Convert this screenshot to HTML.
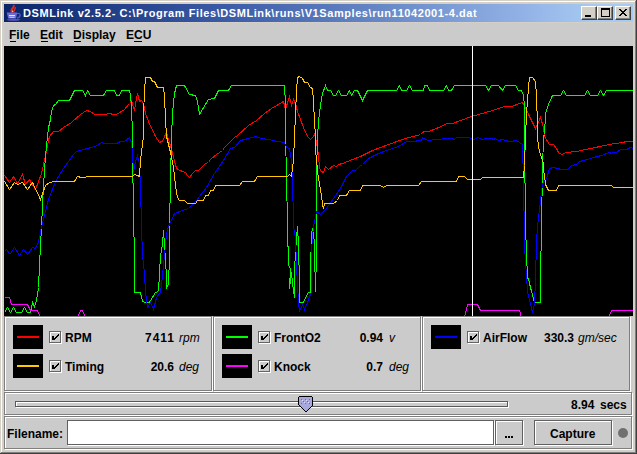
<!DOCTYPE html>
<html><head><meta charset="utf-8">
<style>
html,body{margin:0;padding:0;}
body{width:637px;height:454px;position:relative;overflow:hidden;background:#d4d0c8;font-family:"Liberation Sans",sans-serif;}
.a{position:absolute;}
.t{position:absolute;white-space:nowrap;font-weight:bold;font-size:12px;line-height:14px;color:#000;}
.it{font-weight:normal;font-style:italic;}
</style></head><body>
<div class="a" style="left:0px;top:0px;width:637px;height:454px;background:#404040;"></div>
<div class="a" style="left:0px;top:0px;width:636px;height:453px;background:#d4d0c8;"></div>
<div class="a" style="left:1px;top:1px;width:635px;height:452px;background:#808080;"></div>
<div class="a" style="left:1px;top:1px;width:634px;height:451px;background:#fff;"></div>
<div class="a" style="left:2px;top:2px;width:633px;height:450px;background:#d4d0c8;"></div>
<div class="a" style="left:4px;top:4px;width:629px;height:18px;background:linear-gradient(to right,#0a246a 0px,#3c5ca8 226px,#6f90cc 406px,#94b4e8 526px,#a6caf0 590px,#a6caf0 629px);"></div>
<div class="t" style="left:23px;top:6px;font-size:11px;line-height:14px;color:#fff;letter-spacing:0.57px">DSMLink v2.5.2- C:\Program Files\DSMLink\runs\V1Samples\run11042001-4.dat</div>
<svg class="a" style="left:0px;top:0px" width="24" height="24"><path d="M13.5 5 C14.8 7 12 8.5 11.5 10 C11 11.5 12.3 12.3 13 12.7" stroke="#e8281c" stroke-width="1.9" fill="none"/><path d="M15.5 7.2 C15.2 9 14 10.5 13.6 12.2" stroke="#e8281c" stroke-width="1.4" fill="none"/><rect x="12" y="10.5" width="1.2" height="1.5" fill="#f0c040"/><path d="M17 13.6 C21.5 12.8 21 17 17 18.2" stroke="#5a5ac8" stroke-width="1.2" fill="none"/><path d="M6.8 12.6 L17.2 12.6 L16 18.6 L8.2 18.6 Z" fill="#6a6ad8"/><rect x="9" y="15" width="6" height="1.2" fill="#e0e0ff"/><rect x="9.5" y="17" width="5" height="1" fill="#b8b8f8"/><ellipse cx="13.5" cy="19.8" rx="7" ry="0.9" fill="#5a5ac0"/></svg>
<div class="a" style="left:581px;top:6px;width:16px;height:14px;box-sizing:border-box;background:#d4d0c8;border-top:1px solid #fff;border-left:1px solid #fff;border-right:1px solid #404040;border-bottom:1px solid #404040;box-shadow:inset -1px -1px 0 #808080"></div>
<div class="a" style="left:597px;top:6px;width:16px;height:14px;box-sizing:border-box;background:#d4d0c8;border-top:1px solid #fff;border-left:1px solid #fff;border-right:1px solid #404040;border-bottom:1px solid #404040;box-shadow:inset -1px -1px 0 #808080"></div>
<div class="a" style="left:615px;top:6px;width:16px;height:14px;box-sizing:border-box;background:#d4d0c8;border-top:1px solid #fff;border-left:1px solid #fff;border-right:1px solid #404040;border-bottom:1px solid #404040;box-shadow:inset -1px -1px 0 #808080"></div>
<div class="a" style="left:585px;top:15px;width:6px;height:2px;background:#000;"></div>
<div class="a" style="left:601px;top:8px;width:9px;height:9px;box-sizing:border-box;border:1px solid #000;border-top-width:2px"></div>
<svg class="a" style="left:619px;top:9px" width="8" height="7" shape-rendering="crispEdges"><path d="M0 0h2v1h-2z M6 0h2v1h-2z M1 1h2v1h-2z M5 1h2v1h-2z M2 2h4v1h-4z M3 3h2v1h-2z M2 4h4v1h-4z M1 5h2v1h-2z M5 5h2v1h-2z M0 6h2v1h-2z M6 6h2v1h-2z" fill="#000"/></svg>
<div class="a" style="left:4px;top:23px;width:629px;height:427px;background:#cbcbcb;"></div>
<div class="t" style="left:9px;top:28px;">File</div>
<div class="t" style="left:40px;top:28px;">Edit</div>
<div class="t" style="left:73px;top:28px;">Display</div>
<div class="t" style="left:126px;top:28px;">ECU</div>
<div class="a" style="left:10px;top:41px;width:6px;height:1px;background:#000;"></div>
<div class="a" style="left:41px;top:41px;width:7px;height:1px;background:#000;"></div>
<div class="a" style="left:74px;top:41px;width:7px;height:1px;background:#000;"></div>
<div class="a" style="left:134px;top:41px;width:8px;height:1px;background:#000;"></div>
<svg class="a" style="left:4px;top:46px" width="629" height="270" shape-rendering="crispEdges">
<rect width="629" height="270" fill="#000"/>
<g fill="none" stroke-width="1">
<polyline stroke="#ff0000" points="0.5,129.5 5.5,136.5 9.5,130.5 13.5,137.5 18.5,128.5 21.5,138.5 25.5,133.5 27.5,137.5 31.5,143.5 37.5,127.5 41.5,109.5 44.5,94.5 45.5,90.5 49.5,85.5 54.5,85.5 59.5,81.5 67.5,76.5 76.5,68.5 82.5,64.5 86.5,65.5 90.5,68.5 100.5,68.5 105.5,67.5 109.5,68.5 112.5,68.5 120.5,63.5 125.5,57.5 127.5,54.5 129.5,61.5 130.5,63.5 133.5,47.5 135.5,55.5 137.5,54.5 139.5,57.5 141.5,67.5 144.5,75.5 151.5,90.5 155.5,96.5 159.5,94.5 160.5,90.5 162.5,86.5 163.5,90.5 168.5,106.5 171.5,119.5 173.5,123.5 181.5,126.5 183.5,129.5 185.5,131.5 188.5,127.5 191.5,124.5 194.5,124.5 197.5,121.5 201.5,117.5 204.5,116.5 206.5,113.5 212.5,108.5 218.5,104.5 220.5,101.5 230.5,91.5 233.5,89.5 244.5,79.5 252.5,74.5 260.5,67.5 267.5,62.5 279.5,55.5 281.5,63.5 285.5,50.5 287.5,59.5 289.5,53.5 291.5,57.5 293.5,65.5 299.5,81.5 303.5,90.5 306.5,93.5 309.5,90.5 311.5,86.5 311.5,90.5 314.5,109.5 315.5,122.5 317.5,125.5 319.5,126.5 321.5,120.5 324.5,123.5 329.5,119.5 332.5,120.5 334.5,118.5 338.5,117.5 348.5,113.5 356.5,110.5 368.5,104.5 384.5,98.5 401.5,92.5 416.5,88.5 418.5,86.5 420.5,85.5 424.5,85.5 432.5,82.5 443.5,77.5 448.5,77.5 456.5,74.5 467.5,70.5 488.5,64.5 500.5,60.5 507.5,60.5 518.5,56.5 519.5,58.5 521.5,61.5 524.5,68.5 531.5,82.5 536.5,71.5 539.5,81.5 540.5,90.5 545.5,98.5 549.5,98.5 552.5,102.5 554.5,106.5 557.5,108.5 562.5,106.5 572.5,105.5 586.5,102.5 600.5,99.5 610.5,97.5 619.5,96.5 621.5,95.5 629.5,95.5"/>
<polyline stroke="#00ff00" points="0.5,266.5 3.5,261.5 6.5,266.5 9.5,261.5 12.5,266.5 17.5,266.5 20.5,261.5 23.5,266.5 26.5,266.5 28.5,256.5 30.5,260.5 32.5,254.5 34.5,241.5 35.5,219.5 37.5,180.5 39.5,139.5 41.5,109.5 43.5,90.5 44.5,81.5 46.5,73.5 47.5,65.5 49.5,59.5 51.5,58.5 54.5,54.5 65.5,54.5 70.5,44.5 78.5,44.5 81.5,49.5 83.5,44.5 86.5,49.5 99.5,49.5 102.5,44.5 110.5,44.5 112.5,49.5 115.5,49.5 117.5,44.5 125.5,44.5 126.5,49.5 127.5,59.5 128.5,90.5 129.5,180.5 130.5,200.5 130.5,246.5 136.5,246.5 138.5,255.5 141.5,256.5 145.5,256.5 151.5,246.5 154.5,245.5 155.5,227.5 156.5,209.5 158.5,198.5 159.5,184.5 160.5,199.5 161.5,213.5 162.5,232.5 162.5,242.5 164.5,237.5 165.5,211.5 165.5,180.5 167.5,90.5 168.5,67.5 170.5,47.5 172.5,39.5 180.5,39.5 185.5,48.5 191.5,49.5 193.5,55.5 195.5,68.5 204.5,53.5 210.5,52.5 214.5,44.5 224.5,44.5 227.5,39.5 280.5,39.5 281.5,57.5 281.5,90.5 282.5,129.5 283.5,180.5 284.5,219.5 286.5,222.5 285.5,242.5 287.5,226.5 288.5,237.5 290.5,251.5 290.5,223.5 292.5,191.5 293.5,180.5 294.5,199.5 295.5,237.5 295.5,256.5 299.5,256.5 302.5,249.5 304.5,246.5 306.5,246.5 306.5,226.5 307.5,186.5 309.5,180.5 310.5,205.5 311.5,245.5 312.5,207.5 312.5,180.5 312.5,129.5 313.5,90.5 314.5,75.5 316.5,59.5 318.5,47.5 321.5,39.5 323.5,44.5 326.5,44.5 329.5,49.5 331.5,49.5 334.5,44.5 337.5,49.5 342.5,49.5 345.5,44.5 347.5,49.5 350.5,44.5 353.5,44.5 358.5,54.5 363.5,44.5 392.5,44.5 395.5,39.5 397.5,44.5 402.5,44.5 405.5,39.5 408.5,44.5 419.5,44.5 420.5,39.5 423.5,39.5 425.5,44.5 439.5,44.5 442.5,39.5 444.5,44.5 447.5,44.5 450.5,39.5 481.5,39.5 484.5,44.5 487.5,39.5 494.5,39.5 498.5,44.5 501.5,39.5 511.5,39.5 514.5,44.5 517.5,44.5 519.5,49.5 520.5,59.5 520.5,90.5 521.5,180.5 522.5,207.5 523.5,232.5 524.5,232.5 525.5,237.5 527.5,245.5 530.5,256.5 536.5,256.5 536.5,230.5 537.5,180.5 538.5,123.5 539.5,90.5 540.5,88.5 541.5,67.5 544.5,58.5 548.5,49.5 556.5,49.5 559.5,44.5 562.5,49.5 580.5,49.5 583.5,44.5 586.5,49.5 593.5,49.5 596.5,44.5 599.5,49.5 602.5,44.5 629.5,44.5"/>
<polyline stroke="#ff00ff" points="0.5,251.5 5.5,251.5 7.5,258.5 23.5,258.5 26.5,264.5 33.5,264.5 36.5,271.5 73.5,271.5 76.5,264.5 78.5,264.5 81.5,271.5 460.5,271.5 463.5,258.5 473.5,258.5 476.5,264.5 515.5,264.5 517.5,271.5 604.5,271.5 607.5,264.5 629.5,264.5"/>
<polyline stroke="#0000ff" points="0.5,205.5 2.5,203.5 5.5,207.5 6.5,207.5 10.5,201.5 15.5,209.5 19.5,203.5 23.5,208.5 28.5,201.5 31.5,202.5 34.5,195.5 36.5,186.5 37.5,180.5 40.5,169.5 44.5,153.5 51.5,135.5 59.5,122.5 69.5,108.5 72.5,105.5 79.5,103.5 87.5,101.5 93.5,99.5 97.5,96.5 100.5,97.5 112.5,97.5 116.5,95.5 120.5,95.5 125.5,91.5 127.5,96.5 128.5,107.5 129.5,125.5 131.5,115.5 133.5,109.5 135.5,117.5 136.5,141.5 137.5,180.5 138.5,209.5 140.5,227.5 141.5,245.5 143.5,261.5 146.5,256.5 149.5,263.5 152.5,251.5 156.5,246.5 158.5,229.5 160.5,209.5 162.5,187.5 164.5,180.5 170.5,167.5 178.5,164.5 184.5,162.5 192.5,154.5 202.5,141.5 210.5,127.5 219.5,114.5 226.5,102.5 230.5,101.5 236.5,94.5 244.5,92.5 251.5,90.5 257.5,92.5 264.5,93.5 273.5,95.5 280.5,96.5 282.5,101.5 285.5,102.5 287.5,115.5 288.5,129.5 289.5,180.5 291.5,191.5 292.5,219.5 294.5,255.5 295.5,265.5 298.5,258.5 300.5,263.5 303.5,256.5 307.5,245.5 307.5,203.5 309.5,180.5 312.5,165.5 316.5,168.5 322.5,162.5 329.5,152.5 336.5,142.5 342.5,130.5 348.5,124.5 351.5,124.5 355.5,120.5 358.5,118.5 364.5,112.5 374.5,107.5 382.5,104.5 394.5,100.5 402.5,95.5 411.5,95.5 413.5,94.5 417.5,94.5 418.5,91.5 423.5,94.5 427.5,94.5 428.5,93.5 437.5,93.5 438.5,92.5 448.5,92.5 450.5,93.5 452.5,91.5 464.5,91.5 470.5,93.5 473.5,91.5 478.5,93.5 481.5,92.5 487.5,92.5 489.5,93.5 491.5,92.5 494.5,94.5 498.5,93.5 501.5,94.5 505.5,95.5 508.5,95.5 510.5,94.5 512.5,94.5 515.5,96.5 518.5,98.5 518.5,104.5 519.5,129.5 519.5,149.5 520.5,180.5 520.5,199.5 521.5,215.5 523.5,245.5 528.5,266.5 530.5,257.5 531.5,233.5 532.5,195.5 533.5,180.5 536.5,154.5 538.5,137.5 542.5,132.5 545.5,122.5 549.5,121.5 553.5,122.5 557.5,123.5 563.5,123.5 567.5,119.5 572.5,118.5 575.5,115.5 579.5,114.5 583.5,113.5 589.5,111.5 597.5,109.5 605.5,106.5 607.5,107.5 608.5,106.5 612.5,106.5 616.5,103.5 622.5,103.5 626.5,101.5 629.5,102.5"/>
<polyline stroke="#ffc800" points="0.5,135.5 5.5,143.5 10.5,136.5 13.5,138.5 18.5,136.5 23.5,143.5 28.5,136.5 36.5,153.5 38.5,147.5 41.5,139.5 45.5,136.5 51.5,135.5 70.5,135.5 73.5,130.5 77.5,131.5 81.5,131.5 82.5,130.5 128.5,130.5 130.5,128.5 133.5,129.5 135.5,130.5 136.5,113.5 139.5,90.5 139.5,69.5 140.5,44.5 141.5,31.5 146.5,31.5 148.5,35.5 150.5,35.5 153.5,41.5 159.5,41.5 160.5,50.5 161.5,73.5 162.5,90.5 166.5,106.5 169.5,121.5 171.5,139.5 173.5,151.5 175.5,154.5 180.5,154.5 183.5,157.5 191.5,157.5 193.5,154.5 199.5,154.5 201.5,149.5 204.5,149.5 206.5,144.5 209.5,144.5 211.5,139.5 235.5,139.5 238.5,135.5 250.5,135.5 253.5,130.5 283.5,130.5 285.5,128.5 287.5,130.5 289.5,113.5 290.5,90.5 292.5,45.5 293.5,31.5 295.5,30.5 298.5,32.5 300.5,36.5 303.5,36.5 306.5,41.5 308.5,42.5 309.5,55.5 310.5,75.5 311.5,90.5 311.5,104.5 312.5,112.5 313.5,125.5 315.5,137.5 317.5,149.5 318.5,158.5 319.5,162.5 320.5,157.5 329.5,157.5 333.5,154.5 335.5,149.5 342.5,149.5 345.5,144.5 356.5,144.5 358.5,139.5 376.5,139.5 379.5,141.5 382.5,139.5 414.5,139.5 417.5,135.5 452.5,135.5 454.5,130.5 460.5,130.5 463.5,133.5 476.5,133.5 478.5,131.5 519.5,131.5 520.5,119.5 521.5,90.5 522.5,67.5 524.5,41.5 525.5,31.5 528.5,31.5 531.5,35.5 532.5,49.5 533.5,79.5 533.5,90.5 534.5,101.5 537.5,111.5 539.5,117.5 539.5,123.5 540.5,129.5 541.5,138.5 544.5,144.5 552.5,144.5 554.5,139.5 607.5,139.5 609.5,141.5 629.5,141.5"/>
</g><rect x="468" y="0" width="1" height="270" fill="#fff"/></svg>
<div class="a" style="left:5px;top:317px;width:208px;height:75px;box-sizing:border-box;border:1px solid #fff"></div>
<div class="a" style="left:4px;top:316px;width:208px;height:75px;box-sizing:border-box;border:1px solid #7e7e7e"></div>
<div class="a" style="left:214px;top:317px;width:208px;height:75px;box-sizing:border-box;border:1px solid #fff"></div>
<div class="a" style="left:213px;top:316px;width:208px;height:75px;box-sizing:border-box;border:1px solid #7e7e7e"></div>
<div class="a" style="left:423px;top:317px;width:208px;height:75px;box-sizing:border-box;border:1px solid #fff"></div>
<div class="a" style="left:422px;top:316px;width:208px;height:75px;box-sizing:border-box;border:1px solid #7e7e7e"></div>
<div class="a" style="left:13px;top:325px;width:30px;height:24px;background:#000;"></div>
<div class="a" style="left:17px;top:336px;width:22px;height:2px;background:#ff0000;"></div>
<div class="a" style="left:50px;top:332px;width:12px;height:12px;box-sizing:border-box;border:1px solid #fff"></div>
<div class="a" style="left:49px;top:331px;width:12px;height:12px;box-sizing:border-box;border:1px solid #646464"></div>
<svg class="a" style="left:49px;top:331px" width="13" height="13" shape-rendering="crispEdges"><path d="M3 5h2v4h-2z M9 3h1v1h-1z M8 4h1v2h-1z M9 4h1v1h-1z M7 5h1v2h-1z M6 6h1v2h-1z M5 7h1v2h-1z" fill="#000"/></svg>
<div class="t" style="left:65px;top:331px;">RPM</div>
<div class="t" style="right:462px;top:331px;letter-spacing:1px">7411</div>
<div class="t it" style="left:179px;top:331px;">rpm</div>
<div class="a" style="left:13px;top:354px;width:30px;height:24px;background:#000;"></div>
<div class="a" style="left:17px;top:365px;width:22px;height:2px;background:#ffc800;"></div>
<div class="a" style="left:50px;top:361px;width:12px;height:12px;box-sizing:border-box;border:1px solid #fff"></div>
<div class="a" style="left:49px;top:360px;width:12px;height:12px;box-sizing:border-box;border:1px solid #646464"></div>
<svg class="a" style="left:49px;top:360px" width="13" height="13" shape-rendering="crispEdges"><path d="M3 5h2v4h-2z M9 3h1v1h-1z M8 4h1v2h-1z M9 4h1v1h-1z M7 5h1v2h-1z M6 6h1v2h-1z M5 7h1v2h-1z" fill="#000"/></svg>
<div class="t" style="left:65px;top:360px;">Timing</div>
<div class="t" style="right:463px;top:360px;">20.6</div>
<div class="t it" style="left:179px;top:360px;">deg</div>
<div class="a" style="left:222px;top:325px;width:30px;height:24px;background:#000;"></div>
<div class="a" style="left:226px;top:336px;width:22px;height:2px;background:#00ff00;"></div>
<div class="a" style="left:259px;top:332px;width:12px;height:12px;box-sizing:border-box;border:1px solid #fff"></div>
<div class="a" style="left:258px;top:331px;width:12px;height:12px;box-sizing:border-box;border:1px solid #646464"></div>
<svg class="a" style="left:258px;top:331px" width="13" height="13" shape-rendering="crispEdges"><path d="M3 5h2v4h-2z M9 3h1v1h-1z M8 4h1v2h-1z M9 4h1v1h-1z M7 5h1v2h-1z M6 6h1v2h-1z M5 7h1v2h-1z" fill="#000"/></svg>
<div class="t" style="left:274px;top:331px;">FrontO2</div>
<div class="t" style="right:254px;top:331px;">0.94</div>
<div class="t it" style="left:389px;top:331px;">v</div>
<div class="a" style="left:222px;top:354px;width:30px;height:24px;background:#000;"></div>
<div class="a" style="left:226px;top:365px;width:22px;height:2px;background:#ff00ff;"></div>
<div class="a" style="left:259px;top:361px;width:12px;height:12px;box-sizing:border-box;border:1px solid #fff"></div>
<div class="a" style="left:258px;top:360px;width:12px;height:12px;box-sizing:border-box;border:1px solid #646464"></div>
<svg class="a" style="left:258px;top:360px" width="13" height="13" shape-rendering="crispEdges"><path d="M3 5h2v4h-2z M9 3h1v1h-1z M8 4h1v2h-1z M9 4h1v1h-1z M7 5h1v2h-1z M6 6h1v2h-1z M5 7h1v2h-1z" fill="#000"/></svg>
<div class="t" style="left:274px;top:360px;">Knock</div>
<div class="t" style="right:254px;top:360px;">0.7</div>
<div class="t it" style="left:389px;top:360px;">deg</div>
<div class="a" style="left:431px;top:325px;width:30px;height:24px;background:#000;"></div>
<div class="a" style="left:435px;top:336px;width:22px;height:2px;background:#0000ff;"></div>
<div class="a" style="left:468px;top:332px;width:12px;height:12px;box-sizing:border-box;border:1px solid #fff"></div>
<div class="a" style="left:467px;top:331px;width:12px;height:12px;box-sizing:border-box;border:1px solid #646464"></div>
<svg class="a" style="left:467px;top:331px" width="13" height="13" shape-rendering="crispEdges"><path d="M3 5h2v4h-2z M9 3h1v1h-1z M8 4h1v2h-1z M9 4h1v1h-1z M7 5h1v2h-1z M6 6h1v2h-1z M5 7h1v2h-1z" fill="#000"/></svg>
<div class="t" style="left:483px;top:331px;">AirFlow</div>
<div class="t" style="right:63px;top:331px;">330.3</div>
<div class="t it" style="left:578px;top:331px;">gm/sec</div>
<div class="a" style="left:5px;top:393px;width:628px;height:23px;box-sizing:border-box;border:1px solid #fff"></div>
<div class="a" style="left:4px;top:392px;width:628px;height:23px;box-sizing:border-box;border:1px solid #7e7e7e"></div>
<div class="a" style="left:16px;top:402px;width:493px;height:6px;box-sizing:border-box;border:1px solid #fff"></div>
<div class="a" style="left:15px;top:401px;width:493px;height:6px;box-sizing:border-box;border:1px solid #585858"></div>
<svg class="a" style="left:298px;top:396px" width="16" height="17" shape-rendering="crispEdges"><path d="M1 0h13v1h1v8l-7 7h-1l-7-7v-8h1z" fill="#000"/><path d="M1 1h13v8l-6.5 6.5l-6.5-6.5z" fill="#a8a8dc"/><path d="M3 3h1v1h-1z M7 3h1v1h-1z M11 3h1v1h-1z M5 5h1v1h-1z M9 5h1v1h-1z M3 7h1v1h-1z M7 7h1v1h-1z M11 7h1v1h-1z" fill="#6a6aa0"/><path d="M4 4h1v1h-1z M8 4h1v1h-1z M6 6h1v1h-1z M10 6h1v1h-1z" fill="#d8d8ff"/></svg>
<div class="t" style="left:571px;top:398px;">8.94</div>
<div class="t" style="left:600px;top:398px;">secs</div>
<div class="a" style="left:5px;top:417px;width:628px;height:33px;box-sizing:border-box;border:1px solid #fff"></div>
<div class="a" style="left:4px;top:416px;width:628px;height:33px;box-sizing:border-box;border:1px solid #7e7e7e"></div>
<div class="t" style="left:7px;top:427px;">Filename:</div>
<div class="a" style="left:68px;top:421px;width:427px;height:25px;box-sizing:border-box;border:1px solid #fff"></div>
<div class="a" style="left:67px;top:420px;width:427px;height:25px;box-sizing:border-box;border:1px solid #606060"></div>
<div class="a" style="left:68px;top:421px;width:425px;height:23px;background:#fff;"></div>
<div class="a" style="left:496px;top:421px;width:28px;height:25px;box-sizing:border-box;border:1px solid #fff"></div>
<div class="a" style="left:495px;top:420px;width:28px;height:25px;box-sizing:border-box;border:1px solid #606060"></div>
<div class="a" style="left:505px;top:436px;width:2px;height:2px;background:#000;"></div>
<div class="a" style="left:508px;top:436px;width:2px;height:2px;background:#000;"></div>
<div class="a" style="left:511px;top:436px;width:2px;height:2px;background:#000;"></div>
<div class="a" style="left:535px;top:421px;width:78px;height:25px;box-sizing:border-box;border:1px solid #fff"></div>
<div class="a" style="left:534px;top:420px;width:78px;height:25px;box-sizing:border-box;border:1px solid #606060"></div>
<div class="t" style="left:550px;top:427px;">Capture</div>
<div class="a" style="left:618px;top:428px;width:10px;height:10px;border-radius:50%;background:#707070"></div>
</body></html>
